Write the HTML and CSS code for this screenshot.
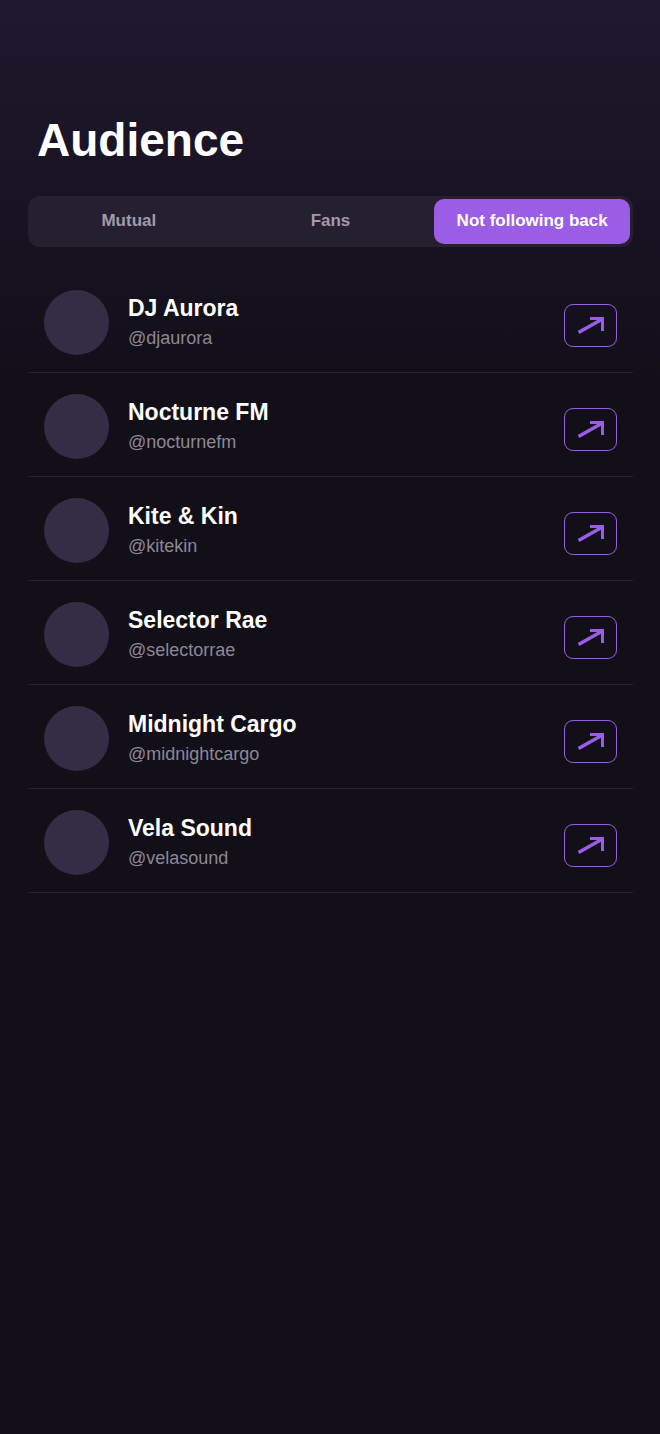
FILE: index.html
```html
<!DOCTYPE html>
<html lang="en">
<head>
<meta charset="utf-8">
<meta name="viewport" content="width=device-width, initial-scale=1">
<title>Audience</title>
<link rel="stylesheet" href="styles.css">
</head>
<body>
<svg class="symbols" aria-hidden="true">
  <symbol id="arrow" viewBox="0 0 26 17">
    <path d="M0.5 15.5 L24.5 2" fill="none" stroke="currentColor" stroke-width="3.4"/>
    <path d="M12 0 H26 V14 H23 V3 H12 Z" fill="currentColor"/>
  </symbol>
</svg>
<main class="page">
  <h1 class="title">Audience</h1>
  <nav class="tabs" aria-label="Audience filter">
    <button class="tab" type="button">Mutual</button>
    <button class="tab" type="button">Fans</button>
    <button class="tab tab-active" type="button" aria-pressed="true">Not following back</button>
  </nav>
  <ul class="list">
    <li class="row">
      <span class="avatar"></span>
      <div class="who"><span class="name">DJ Aurora</span><span class="handle">@djaurora</span></div>
      <button class="open" type="button" aria-label="Open DJ Aurora"><svg class="arrow"><use href="#arrow"/></svg></button>
    </li>
    <li class="row">
      <span class="avatar"></span>
      <div class="who"><span class="name">Nocturne FM</span><span class="handle">@nocturnefm</span></div>
      <button class="open" type="button" aria-label="Open Nocturne FM"><svg class="arrow"><use href="#arrow"/></svg></button>
    </li>
    <li class="row">
      <span class="avatar"></span>
      <div class="who"><span class="name">Kite &amp; Kin</span><span class="handle">@kitekin</span></div>
      <button class="open" type="button" aria-label="Open Kite &amp; Kin"><svg class="arrow"><use href="#arrow"/></svg></button>
    </li>
    <li class="row">
      <span class="avatar"></span>
      <div class="who"><span class="name">Selector Rae</span><span class="handle">@selectorrae</span></div>
      <button class="open" type="button" aria-label="Open Selector Rae"><svg class="arrow"><use href="#arrow"/></svg></button>
    </li>
    <li class="row">
      <span class="avatar"></span>
      <div class="who"><span class="name">Midnight Cargo</span><span class="handle">@midnightcargo</span></div>
      <button class="open" type="button" aria-label="Open Midnight Cargo"><svg class="arrow"><use href="#arrow"/></svg></button>
    </li>
    <li class="row">
      <span class="avatar"></span>
      <div class="who"><span class="name">Vela Sound</span><span class="handle">@velasound</span></div>
      <button class="open" type="button" aria-label="Open Vela Sound"><svg class="arrow"><use href="#arrow"/></svg></button>
    </li>
  </ul>
</main>
</body>
</html>
```
FILE: styles.css
```css
* {
  box-sizing: border-box;
}

body {
  margin: 0;
  background: #120f19;
  color: #ffffff;
  font-family: "Liberation Sans", Arial, sans-serif;
}

.symbols {
  display: none;
}

.page {
  min-height: 100vh;
  padding: 114px 27px 40px 28px;
  background: linear-gradient(#20182e, #120f19 380px);
}

.title {
  margin: 0 0 30px;
  padding-left: 9px;
  font-size: 46px;
  line-height: 52px;
  font-weight: 700;
}

.tabs {
  display: grid;
  grid-template-columns: repeat(3, 1fr);
  border-radius: 12px;
  background: #261f30;
}

.tab {
  height: 45px;
  margin: 3px;
  padding: 0 0 1px;
  border: 0;
  border-radius: 10px;
  background: transparent;
  color: #a09aab;
  font: 700 17px/20px "Liberation Sans", Arial, sans-serif;
  white-space: nowrap;
}

.tab-active {
  background: #9b5de5;
  color: #ffffff;
}

.list {
  margin: 22px 0 0;
  padding: 0;
  list-style: none;
}

.row {
  display: flex;
  align-items: flex-start;
  padding: 21px 16px 17px;
  border-bottom: 1px solid #262231;
}

.avatar {
  width: 65px;
  height: 65px;
  border-radius: 50%;
  background: #352c46;
}

.who {
  display: flex;
  flex: 1;
  flex-direction: column;
  gap: 5px;
  padding: 5px 0 0 19px;
}

.name {
  font-size: 23px;
  line-height: 26px;
  font-weight: 700;
}

.handle {
  color: #8c8797;
  font-size: 18px;
  line-height: 24px;
}

.open {
  display: flex;
  align-items: center;
  justify-content: center;
  width: 53px;
  height: 43px;
  margin-top: 14px;
  padding: 0;
  border: 1px solid #9b5de5;
  border-radius: 9px;
  background: transparent;
  color: #9b5de5;
}

.arrow {
  display: block;
  width: 26px;
  height: 17px;
  overflow: visible;
}
```
